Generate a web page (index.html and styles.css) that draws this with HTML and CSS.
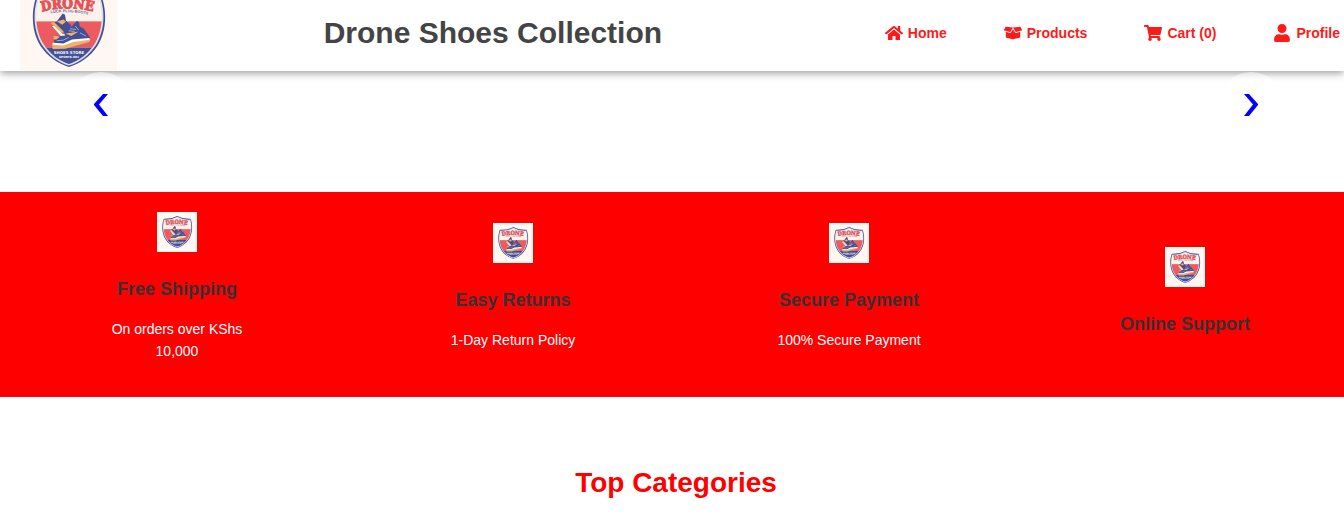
FILE: index.html
```html
<!DOCTYPE html>
<html lang="en">
<head>
<meta charset="utf-8">
<title>Drone Shoes Collection</title>
<link rel="stylesheet" href="styles.css">
</head>
<body>
<svg class="defs" aria-hidden="true">
  <defs>
    <path id="arc-name" d="M18 34Q49 25 80 34"/>
    <path id="arc-line" d="M24 36Q50 30 78 38"/>
    <clipPath id="shield-clip"><path d="M50.500 15Q37 22 19 21C15 35 16 53 24 66C31 77 40 83 50.500 87C61 83 70 77 77 66C85 53 86 35 82 21Q64 22 50.500 15Z"/></clipPath>
    <g id="logo">
      <rect width="100" height="100" fill="#fff7f1"/>
      <path d="M50.500 10Q36 18 17 17C11 33 12 54 21 68C29 80 39 86 50.500 90C62 86 72 80 80 68C89 54 90 33 84 17Q65 18 50.500 10Z" fill="#435095"/>
      <path d="M50.500 12Q37 20 18 19C13 34 14 53 22.500 67C30 78 39 85 50.500 88.500C62 85 71 78 78.500 67C87 53 88 34 83 19Q64 20 50.500 12Z" fill="#dfe0ec"/>
      <g clip-path="url(#shield-clip)">
        <rect width="100" height="43" fill="#fdf2ea"/>
        <rect y="43" width="100" height="27" fill="#ec5b60"/>
        <rect y="70" width="100" height="30" fill="#435095"/>
      </g>
      <text class="logo-name" fill="#e65157" stroke="#e65157" stroke-width="1"><textPath href="#arc-name" startOffset="50%" text-anchor="middle">DRONE</textPath></text>
      <text class="logo-line" fill="#5b6298"><textPath href="#arc-line" startOffset="50%" text-anchor="middle">LUCK PLUG BOOTS</textPath></text>
      <g transform="matrix(.3436 0 0 .3436 -10.3 21)">
        <path d="M123 70L140 64L158 40L165 44L168 62L184 76L172 94L150 98L136 84Z" fill="#435095"/>
        <path d="M122 69L132 66L158 91L172 95L150 99Z" fill="#f3b165"/>
        <path d="M126 78L132 78L158 102L186 106L182 112L154 109Z" fill="#fff"/>
        <path d="M141 64L157 74L168 64L160 58Z" fill="#f3b165"/>
        <path d="M158 89L184 80L200 63L207 66L209 79L222 86L240 112L236 120L208 126L176 130L160 136L134 132L130 106L150 108L166 106Z" fill="#435095"/>
        <path d="M130 106L150 109L140 118L131 118ZM166 100L184 108L206 94L184 98Z" fill="#f3b165"/>
        <path d="M126 131L158 134L188 122L232 118L242 119L238 126L200 136L166 146L128 147Z" fill="#f3b165"/>
        <path d="M128 128L160 130L186 118L238 114L240 119L190 126L160 136L128 134Z" fill="#fff"/>
        <path d="M180 86L198 88M176 92L194 94M196 78L206 90M210 98L228 108M140 122L160 120L176 112" stroke="#cfd3ea" stroke-width="2" fill="none"/>
      </g>
      <text class="logo-shop" x="50.500" y="77" text-anchor="middle" fill="#fff">SHOES STORE</text>
      <text class="logo-small" x="50.500" y="81" text-anchor="middle" fill="#fff">SPORTS.001</text>
    </g>
  </defs>
</svg>

<header class="header">
  <a class="brand" href="#" aria-label="Drone home"><svg class="brand-logo" viewBox="0 21 100 73"><use href="#logo"/></svg></a>
  <h1 class="title">Drone Shoes Collection</h1>
  <nav class="nav">
    <a class="nav-link" href="#"><svg class="icon" viewBox="0 0 576 512"><path d="M280.370 148.260L96 300.110V464a16 16 0 0 0 16 16l112.060-.290a16 16 0 0 0 15.920-16V368a16 16 0 0 1 16-16h64a16 16 0 0 1 16 16v95.640a16 16 0 0 0 16 16.050L464 480a16 16 0 0 0 16-16V300L295.670 148.260a12.190 12.190 0 0 0-15.300 0zM571.600 251.470L488 182.560V44.050a12 12 0 0 0-12-12h-56a12 12 0 0 0-12 12v72.610L318.470 43a48 48 0 0 0-61 0L4.340 251.470a12 12 0 0 0-1.600 16.900l25.500 31A12 12 0 0 0 45.150 301l235.220-193.740a12.190 12.190 0 0 1 15.300 0L530.900 301a12 12 0 0 0 16.900-1.600l25.500-31a12 12 0 0 0-1.700-16.930z"/></svg>Home</a>
    <a class="nav-link" href="#"><svg class="icon" viewBox="0 0 640 512"><path d="M425.700 256c-16.900 0-32.800-9-41.400-23.400L320 126l-64.200 106.600c-8.700 14.500-24.600 23.500-41.500 23.500-4.500 0-9-.6-13.300-1.900L64 215v178c0 14.700 10 27.500 24.200 31l216.200 54.100c10.200 2.500 20.900 2.500 31 0L551.800 424c14.200-3.600 24.200-16.400 24.200-31V215l-137 39.100c-4.300 1.300-8.800 1.900-13.300 1.900zm212.600-112.200L586.800 41c-3.100-6.200-9.800-9.800-16.700-8.900L320 64l91.700 152.100c3.800 6.300 11.400 9.300 18.500 7.300l197.900-56.500c9.900-2.900 14.700-13.900 10.200-23.100zM53.200 41L1.700 143.800c-4.600 9.200.3 20.200 10.100 23l197.900 56.500c7.100 2 14.700-1 18.500-7.300L320 64 69.800 32.100c-6.900-.8-13.500 2.700-16.600 8.900z"/></svg>Products</a>
    <a class="nav-link" href="#"><svg class="icon" viewBox="0 0 576 512"><path d="M528.120 301.319l47.273-208C578.806 78.301 567.391 64 551.990 64H159.208l-9.166-44.810C147.758 8.021 137.930 0 126.529 0H24C10.745 0 0 10.745 0 24v16c0 13.255 10.745 24 24 24h69.883l70.248 343.435C147.325 417.100 136 435.222 136 456c0 30.928 25.072 56 56 56s56-25.072 56-56c0-15.674-6.447-29.835-16.824-40h209.647C430.447 426.165 424 440.326 424 456c0 30.928 25.072 56 56 56s56-25.072 56-56c0-22.172-12.888-41.332-31.579-50.405l5.517-24.276c3.413-15.018-8.002-29.319-23.403-29.319H218.117l-6.545-32h293.145c11.206 0 20.920-7.754 23.403-18.681z"/></svg>Cart (0)</a>
    <a class="nav-link" href="#"><svg class="icon" viewBox="0 0 448 512"><path d="M224 256c70.700 0 128-57.300 128-128S294.700 0 224 0 96 57.300 96 128s57.300 128 128 128zm89.600 32h-16.700c-22.200 10.200-46.900 16-72.900 16s-50.600-5.800-72.900-16h-16.700C60.200 288 0 348.200 0 422.400V464c0 26.500 21.500 48 48 48h352c26.500 0 48-21.500 48-48v-41.600c0-74.200-60.200-134.400-134.400-134.400z"/></svg>Profile</a>
  </nav>
</header>

<main>
  <section class="slider" aria-label="Featured">
    <button class="arrow" type="button" aria-label="Previous"><svg class="chevron" viewBox="0 0 14 22"><path d="M9 0H14L5 10.500L14 22H9L0 11V10Z"/></svg></button>
    <button class="arrow" type="button" aria-label="Next"><svg class="chevron" viewBox="0 0 14 22"><path d="M5 0H0L9 10.500L0 22H5L14 11V10Z"/></svg></button>
  </section>

  <section class="features">
    <div class="feature">
      <svg class="feature-logo" viewBox="0 0 100 100"><use href="#logo"/></svg>
      <h3 class="feature-title">Free Shipping</h3>
      <p class="feature-text">On orders over KShs 10,000</p>
    </div>
    <div class="feature">
      <svg class="feature-logo" viewBox="0 0 100 100"><use href="#logo"/></svg>
      <h3 class="feature-title">Easy Returns</h3>
      <p class="feature-text">1-Day Return Policy</p>
    </div>
    <div class="feature">
      <svg class="feature-logo" viewBox="0 0 100 100"><use href="#logo"/></svg>
      <h3 class="feature-title">Secure Payment</h3>
      <p class="feature-text">100% Secure Payment</p>
    </div>
    <div class="feature">
      <svg class="feature-logo" viewBox="0 0 100 100"><use href="#logo"/></svg>
      <h3 class="feature-title">Online Support</h3>
    </div>
  </section>

  <section class="categories">
    <h2 class="section-title">Top Categories</h2>
  </section>
</main>
</body>
</html>
```
FILE: styles.css
```css
* {
  box-sizing: border-box;
}

body {
  margin: 0;
  background: #fff;
  color: #333;
  font-family: "Liberation Sans", Arial, sans-serif;
}

h1, h2, h3, p {
  margin: 0;
}

.defs {
  display: block;
  width: 0;
  height: 0;
}

.logo-name {
  font: bold 14px "DejaVu Serif Condensed", "DejaVu Serif", serif;
}

.logo-line {
  font: bold 4px "Liberation Sans", sans-serif;
}

.logo-shop {
  font: bold 4px "DejaVu Sans", sans-serif;
}

.logo-small {
  font: bold 3px "DejaVu Sans", sans-serif;
}

.header {
  display: flex;
  align-items: center;
  justify-content: space-between;
  padding: 0 4px 0 20px;
  background: #fff;
  box-shadow: 0 2px 8px rgba(0, 0, 0, 0.4);
}

.brand-logo {
  display: block;
  width: 97px;
  height: 71px;
}

.title {
  padding-right: 16px;
  color: #444;
  font-size: 30px;
  line-height: 36px;
  margin-bottom: 6px;
}

.nav {
  display: flex;
  gap: 57px;
  margin-bottom: 5px;
}

.nav-link {
  display: flex;
  align-items: center;
  gap: 5px;
  color: #ff1a1a;
  font-size: 14px;
  font-weight: bold;
  line-height: 20px;
  text-decoration: none;
  white-space: nowrap;
}

.icon {
  width: 18px;
  height: 18px;
  fill: currentColor;
}

.slider {
  display: flex;
  justify-content: space-between;
  padding: 1px 60px 54px 68px;
}

.arrow {
  display: flex;
  align-items: center;
  justify-content: center;
  width: 66px;
  height: 66px;
  padding: 0;
  border: 0;
  border-radius: 50%;
  background: rgba(255, 255, 255, 0.5);
  color: #00f;
}

.chevron {
  width: 14px;
  height: 22px;
  fill: currentColor;
}

.features {
  display: grid;
  grid-template-columns: repeat(4, 1fr);
  align-items: center;
  padding: 20px 0;
  background: #f00;
}

.feature {
  display: flex;
  flex-direction: column;
  align-items: center;
  padding-left: 18px;
  text-align: center;
}

.feature-logo {
  width: 40px;
  height: 40px;
}

.feature-title {
  margin: 25px 0 6px;
  font-size: 18px;
  line-height: 24px;
}

.feature-text {
  max-width: 150px;
  margin: 11px 0 15px;
  color: #fff;
  font-size: 14px;
  line-height: 22px;
}

.categories {
  padding: 68px 0 12px 8px;
  text-align: center;
}

.section-title {
  color: #f00;
  font-size: 28px;
  line-height: 36px;
}
```
